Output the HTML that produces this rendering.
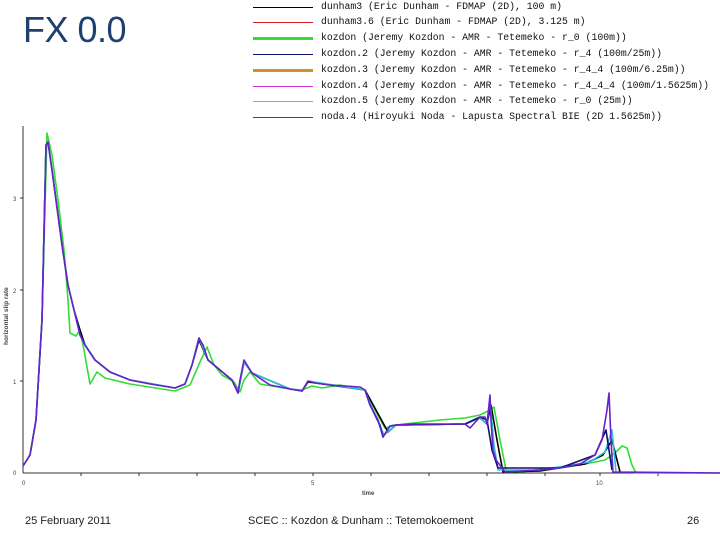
<!DOCTYPE html>
<html><head><meta charset="utf-8"><style>
html,body{margin:0;padding:0;background:#fff;width:720px;height:540px;overflow:hidden;position:relative;font-family:"Liberation Sans",sans-serif}
.t{position:absolute;left:23px;top:9px;font-size:36px;color:#1f3f6e;letter-spacing:-0.5px}
.lg{position:absolute;left:321px;font-family:"Liberation Mono","DejaVu Sans Mono",monospace;font-size:9.8px;color:#111;white-space:pre;line-height:12px}
.ln{position:absolute;left:253px;width:60px}
.f{position:absolute;top:515px;font-size:11px;color:#222}
</style></head><body>
<div class="t">FX 0.0</div>
<div class="ln" style="top:7px;height:1px;background:#000"></div>
<div class="ln" style="top:22px;height:1px;background:#d02020"></div>
<div class="ln" style="top:37px;height:3px;background:#33dd33"></div>
<div class="ln" style="top:54px;height:1px;background:#101070"></div>
<div class="ln" style="top:69px;height:3px;background:#d09030"></div>
<div class="ln" style="top:86px;height:1px;background:#d030d0"></div>
<div class="ln" style="top:101px;height:1px;background:#30d0d0"></div>
<div class="ln" style="top:117px;height:1px;background:#6020c0"></div>
<div class="lg" style="top:1px">dunham3 (Eric Dunham - FDMAP (2D), 100 m)</div>
<div class="lg" style="top:16px">dunham3.6 (Eric Dunham - FDMAP (2D), 3.125 m)</div>
<div class="lg" style="top:32px">kozdon (Jeremy Kozdon - AMR - Tetemeko - r_0 (100m))</div>
<div class="lg" style="top:48px">kozdon.2 (Jeremy Kozdon - AMR - Tetemeko - r_4 (100m/25m))</div>
<div class="lg" style="top:64px">kozdon.3 (Jeremy Kozdon - AMR - Tetemeko - r_4_4 (100m/6.25m))</div>
<div class="lg" style="top:80px">kozdon.4 (Jeremy Kozdon - AMR - Tetemeko - r_4_4_4 (100m/1.5625m))</div>
<div class="lg" style="top:95px">kozdon.5 (Jeremy Kozdon - AMR - Tetemeko - r_0 (25m))</div>
<div class="lg" style="top:111px">noda.4 (Hiroyuki Noda - Lapusta Spectral BIE (2D 1.5625m))</div>
<svg width="720" height="540" style="position:absolute;left:0;top:0" xmlns="http://www.w3.org/2000/svg">
<g stroke="#333" stroke-width="1" fill="none">
<line x1="23" y1="126" x2="23" y2="473"/>
<line x1="23" y1="473" x2="720" y2="473"/>
<path d="M23 198h-3M23 290h-3M23 381h-3M81 473v3M139 473v3M197 473v3M255 473v3M313 473v3M371 473v3M429 473v3M487 473v3M545 473v3M600 473v3M658 473v3"/>
</g>
<g font-family="Liberation Sans,sans-serif" font-size="6" fill="#444">
<text x="13" y="201">3</text><text x="13" y="293">2</text><text x="13" y="384">1</text><text x="13" y="475">0</text>
<text x="22" y="485">0</text><text x="311" y="485">5</text><text x="596" y="485">10</text>
<text x="362" y="495" font-weight="bold">time</text>
<text transform="translate(8,345) rotate(-90)" font-weight="bold" font-size="6.5">horizontal slip rate</text>
</g>
<g fill="none" stroke-width="1.6" stroke-linejoin="round">
<path stroke="#33dd33" d="M23 466L30 455L36 420L42 320L47 133L52 155L58 200L64 250L68 300L70 333L76 336L80 330L84 350L90 384L97 372L105 378L130 384L175 391L190 385L200 362L207 347L214 365L222 375L234 382L240 392L244 380L250 372L260 384L290 389L302 390L312 386L322 388L340 385L365 390L375 410L385 428L396 425L440 420L465 418L480 415L490 410L494 407L500 440L506 470L520 472L550 468L580 465L605 460L615 453L622 446L627 448L632 465L636 473L720 473"/>
<path stroke="#000" d="M23 466L30 455L36 420L42 320L46 145L48 142L52 170L58 215L62 245L68 285L74 310L80 330L85 345L95 360L110 372L130 380L175 388L185 384L192 365L199 340L208 360L232 380L238 393L244 362L252 373L290 389L302 391L308 382L330 385L365 390L376 410L388 432L396 425L465 424L480 418L487 424L491 405L497 440L503 472L540 471L585 464L603 455L612 440L620 472"/>
<path stroke="#30c0e0" d="M23 466L30 455L36 420L42 320L46 145L48 142L52 170L58 215L62 245L68 285L74 310L80 335L85 345L95 360L110 372L130 380L175 388L185 384L192 365L199 338L208 360L232 380L238 393L244 362L252 373L290 389L302 391L308 381L365 390L372 408L384 435L396 425L465 424L480 418L487 424L490 400L494 445L498 470L540 470L590 462L605 452L612 430L616 472"/>
<path stroke="#101070" d="M365 390L370 405L380 425L383 437L390 426L396 425L465 424L480 417L487 420L492 450L498 468L560 468L595 455L606 430L612 470"/>
<path stroke="#6622cc" d="M23 466L30 455L36 420L42 320L46 145L48 142L52 170L58 215L62 245L68 285L74 310L80 335L85 345L95 360L110 372L130 380L150 384L175 388L185 384L192 365L199 338L203 345L208 360L220 370L232 380L238 393L240 380L244 360L252 373L270 385L290 389L302 391L308 381L315 383L330 385L360 387L365 390L370 405L378 420L383 437L390 426L396 425L410 424L465 424L470 428L480 417L485 417L487 424L489 405L490 395L491 420L493 450L496 460L505 472L540 470L560 468L580 464L595 455L602 440L607 410L609 393L611 440L613 472L720 473"/>
</g>
</svg>
<div class="f" style="left:25px">25 February 2011</div>
<div class="f" style="left:248px">SCEC :: Kozdon &amp; Dunham :: Tetemokoement</div>
<div class="f" style="left:687px">26</div>
</body></html>
